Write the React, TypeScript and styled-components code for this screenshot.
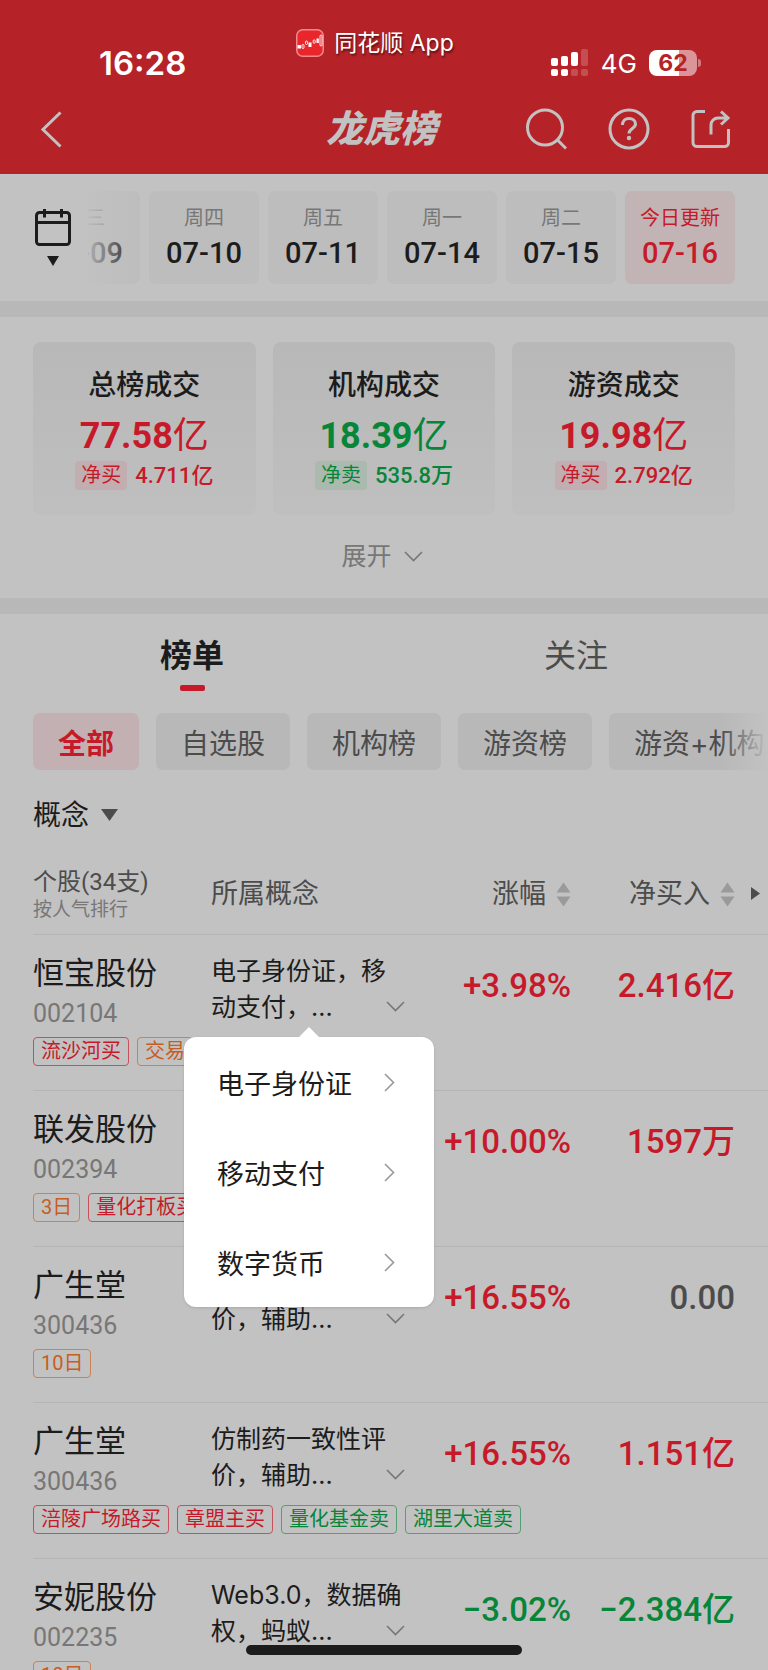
import React from "react";
import styled, { createGlobalStyle } from "styled-components";

type Tone = "red" | "green" | "orange" | "gray";

const tones: Record<Tone, string> = {
  red: "#c61a2a",
  green: "#078538",
  orange: "#c65e22",
  gray: "#4c4c4c",
};
const tagBorders: Record<Tone, string> = {
  red: "#c6515b",
  green: "#53a170",
  orange: "#c8835a",
  gray: "#999999",
};
const tints: Record<Tone, string> = {
  red: "#c2aeb0",
  green: "#abbaaf",
  orange: "#c2b4aa",
  gray: "#bababa",
};

const sans = `Inter, "Noto Sans CJK SC", sans-serif`;
const numeric = `Roboto, "Noto Sans CJK SC", sans-serif`;

const GlobalStyle = createGlobalStyle`
  * { box-sizing: border-box; }
  body { margin: 0; background: #c2c2c2; }
  button { border: 0; padding: 0; margin: 0; background: none; color: inherit; font: inherit; cursor: pointer; }
  svg { display: block; flex: none; }
`;

const Screen = styled.div`
  position: relative;
  display: flex;
  flex-direction: column;
  height: 100vh;
  overflow: hidden;
  background: #c2c2c2;
  color: #1c1c1c;
  font-family: ${sans};
`;

const Header = styled.header`
  position: relative;
  flex: none;
  background: #b52329;
`;

const StatusBar = styled.div`
  display: flex;
  justify-content: space-between;
  align-items: flex-end;
  height: 84px;
  padding: 0 67px 0 99px;
  color: #fff;
`;

const Clock = styled.time`
  font-size: 33px;
  line-height: 42px;
  font-weight: 600;
`;

const SourceApp = styled.div`
  position: absolute;
  top: 28px;
  left: 0;
  right: 0;
  display: flex;
  justify-content: center;
  align-items: center;
  gap: 10px;
  padding-right: 18px;
  color: #fff;
  font-size: 23px;
  line-height: 30px;
  text-shadow: 1px 2px 2px rgba(0, 0, 0, 0.5);
`;

const StatusIcons = styled.div`
  display: flex;
  align-items: center;
  gap: 12px;
  height: 42px;
  font-size: 26px;
`;

const Battery = styled.div`
  display: flex;
  align-items: center;
  gap: 1px;
`;

const BatteryBody = styled.div`
  width: 48px;
  height: 26px;
  border-radius: 8px;
  background: linear-gradient(90deg, #fff 62%, #db9497 62%);
  color: #b52329;
  font-size: 23px;
  font-weight: 700;
  line-height: 26px;
  text-align: center;
`;

const BatteryTip = styled.div`
  width: 3px;
  height: 8px;
  border-radius: 0 3px 3px 0;
  background: #d27b7f;
`;

const NavBar = styled.nav`
  display: grid;
  grid-template-columns: 1fr auto 1fr;
  align-items: center;
  height: 90px;
  padding: 0 37px 0 40px;
  color: #c2c2c2;
`;

const Title = styled.h1`
  margin: 0;
  padding-right: 8px;
  font-size: 37px;
  line-height: 48px;
  font-weight: 900;
  font-style: italic;
`;

const NavActions = styled.div`
  display: flex;
  justify-content: flex-end;
  align-items: center;
  gap: 41px;
`;

const DateBar = styled.section`
  display: flex;
  flex: none;
  padding: 17px 33px 17px 34px;
`;

const CalendarButton = styled.button`
  display: flex;
  flex: none;
  flex-direction: column;
  align-items: center;
  gap: 9px;
  width: 38px;
  padding-top: 17px;
`;

const DateStrip = styled.div`
  position: relative;
  display: flex;
  justify-content: flex-end;
  flex: 1;
  gap: 9px;
  margin-left: 16px;
  overflow: hidden;

  &::before {
    content: "";
    position: absolute;
    inset: 0 auto 0 0;
    width: 52px;
    background: linear-gradient(90deg, rgba(194, 194, 194, 0.9), rgba(194, 194, 194, 0));
  }
`;

const DateTile = styled.button<{ $active?: boolean }>`
  display: flex;
  flex: none;
  flex-direction: column;
  align-items: center;
  width: 110px;
  height: 93px;
  padding-top: 13px;
  border-radius: 7px;
  background: ${(p) => (p.$active ? "#c2b3b4" : "#bdbdbd")};
  color: ${(p) => (p.$active ? tones.red : "#1c1c1c")};
`;

const Weekday = styled.span<{ $active?: boolean }>`
  color: ${(p) => (p.$active ? tones.red : "#777777")};
  font-size: 20px;
  line-height: 28px;
`;

const DateText = styled.span`
  font-family: ${numeric};
  font-size: 29px;
  font-weight: 500;
  line-height: 42px;
`;

const Band = styled.div`
  flex: none;
  height: 16px;
  background: #b8b8b8;
`;

const Summary = styled.section`
  flex: none;
  padding: 25px 33px 23px;
`;

const SummaryCards = styled.div`
  display: grid;
  grid-template-columns: repeat(3, 1fr);
  gap: 17px;
`;

const SummaryCard = styled.article`
  display: flex;
  flex-direction: column;
  align-items: center;
  padding: 23px 0 25px;
  border-radius: 8px;
  background: linear-gradient(#b8b8b8, #bfbfbf);
`;

const CardTitle = styled.h2`
  margin: 0;
  font-size: 28px;
  line-height: 40px;
  font-weight: 500;
`;

const CardValue = styled.div<{ $tone: Tone }>`
  margin-top: 6px;
  color: ${(p) => tones[p.$tone]};
  font-family: ${numeric};
  font-size: 36px;
  font-weight: 700;
  line-height: 50px;
`;

const Unit = styled.span`
  font-weight: 400;
`;

const CardNet = styled.div<{ $tone: Tone }>`
  display: flex;
  align-items: center;
  gap: 8px;
  color: ${(p) => tones[p.$tone]};
  font-family: ${numeric};
  font-size: 22px;
  font-weight: 500;
  line-height: 29px;
`;

const NetLabel = styled.span<{ $tone: Tone }>`
  padding: 0 6px;
  border-radius: 4px;
  background: ${(p) => tints[p.$tone]};
  font-size: 20px;
  font-weight: 400;
`;

const ExpandButton = styled.button`
  display: flex;
  align-items: center;
  gap: 12px;
  margin: 22px auto 0;
  padding-right: 4px;
  color: #777777;
  font-size: 25px;
  line-height: 38px;
`;

const Tabs = styled.div`
  display: grid;
  grid-template-columns: 1fr 1fr;
  flex: none;
  padding-top: 20px;
`;

const Tab = styled.button<{ $active?: boolean }>`
  display: flex;
  flex-direction: column;
  align-items: center;
  gap: 7px;
  color: ${(p) => (p.$active ? "#1c1c1c" : "#4c4c4c")};
  font-size: 32px;
  font-weight: ${(p) => (p.$active ? 700 : 400)};
  line-height: 44px;

  &::after {
    content: "";
    width: 25px;
    height: 6px;
    border-radius: 2px;
    background: ${(p) => (p.$active ? "#c61a2a" : "transparent")};
  }
`;

const Filters = styled.div`
  position: relative;
  display: flex;
  flex: none;
  gap: 17px;
  margin-top: 22px;
  padding-left: 33px;
  overflow: hidden;

  &::after {
    content: "";
    position: absolute;
    inset: 0 0 0 auto;
    width: 48px;
    background: linear-gradient(90deg, rgba(194, 194, 194, 0), #c2c2c2);
  }
`;

const Chip = styled.button<{ $active?: boolean }>`
  flex: none;
  height: 57px;
  padding: 0 25px;
  border-radius: 7px;
  background: ${(p) => (p.$active ? "#c2b0b2" : "#b8b8b8")};
  color: ${(p) => (p.$active ? "#c61a2a" : "#4c4c4c")};
  font-size: 28px;
  font-weight: ${(p) => (p.$active ? 700 : 400)};
  white-space: nowrap;
`;

const ConceptFilter = styled.button`
  display: flex;
  flex: none;
  align-self: flex-start;
  align-items: center;
  gap: 12px;
  margin: 25px 0 31px 33px;
  font-size: 28px;
  line-height: 40px;
`;

const Listing = styled.main`
  flex: 1;
  min-height: 0;
  margin-left: 33px;
`;

const StockTable = styled.table`
  width: 100%;
  table-layout: fixed;
  border-collapse: separate;
  border-spacing: 0;
`;

const HeadCell = styled.th<{ $width?: number; $align?: string }>`
  position: relative;
  width: ${(p) => (p.$width ? `${p.$width}px` : "auto")};
  padding: 0 0 12px;
  border-bottom: 1px solid #b5b5b5;
  color: #4c4c4c;
  font-size: 27px;
  font-weight: 400;
  line-height: 36px;
  text-align: ${(p) => p.$align || "left"};
  white-space: nowrap;

  &:last-child {
    padding-right: 33px;
  }
`;

const HeadMain = styled.div`
  font-family: ${numeric};
  font-size: 24px;
  line-height: 32px;
`;

const HeadSub = styled.div`
  color: #777777;
  font-size: 19px;
  line-height: 24px;
`;

const SortButton = styled.button`
  display: inline-flex;
  align-items: center;
  gap: 10px;
  vertical-align: top;
`;

const MoreMark = styled.svg`
  position: absolute;
  top: 21px;
  right: 8px;
`;

const NameCell = styled.td`
  height: 102px;
  padding: 18px 0 0;
  vertical-align: top;
`;

const StockName = styled.div`
  font-size: 31px;
  line-height: 40px;
`;

const StockCode = styled.div`
  margin-top: 7px;
  color: #777777;
  font-family: ${numeric};
  font-size: 25px;
  line-height: 28px;
`;

const ConceptCell = styled.td`
  position: relative;
  padding: 18px 0 0;
  vertical-align: top;
`;

const ConceptButton = styled.button`
  display: flex;
  justify-content: space-between;
  align-items: flex-end;
  width: 100%;
  color: #1c1c1c;
  font-size: 25px;
  line-height: 36px;
  text-align: left;
  white-space: nowrap;

  svg {
    margin: 0 0 13px -20px;
  }
`;

const FigureCell = styled.td<{ $tone: Tone }>`
  padding: 31px 0 0;
  color: ${(p) => tones[p.$tone]};
  font-family: ${numeric};
  font-size: 33px;
  font-weight: 500;
  line-height: 40px;
  text-align: right;
  vertical-align: top;
  white-space: nowrap;

  &:last-child {
    padding-right: 33px;
  }
`;

const TagCell = styled.td`
  height: 54px;
  padding: 0;
  border-bottom: 1px solid #b5b5b5;
  vertical-align: top;
`;

const TagList = styled.div`
  display: flex;
  gap: 8px;
`;

const Tag = styled.span<{ $tone: Tone }>`
  height: 29px;
  padding: 0 7px;
  border: 1px solid ${(p) => tagBorders[p.$tone]};
  border-radius: 4px;
  color: ${(p) => tones[p.$tone]};
  font-family: ${numeric};
  font-size: 20px;
  line-height: 27px;
  white-space: nowrap;
`;

const Popover = styled.div`
  position: absolute;
  z-index: 2;
  top: 102px;
  left: -27px;
  width: 250px;
  border-radius: 12px;
  background: #fff;
  box-shadow: 0 1px 3px rgba(0, 0, 0, 0.12);

  &::before {
    content: "";
    position: absolute;
    top: -10px;
    left: 115px;
    border: 10px solid transparent;
    border-top: 0;
    border-bottom-color: #fff;
  }
`;

const PopoverItem = styled.button`
  display: flex;
  justify-content: space-between;
  align-items: center;
  width: 100%;
  height: 90px;
  padding: 0 39px 0 33px;
  color: #1c1c1c;
  font-size: 27px;
`;

const HomeIndicator = styled.div`
  position: absolute;
  z-index: 3;
  bottom: 15px;
  left: 32%;
  width: 36%;
  height: 10px;
  border-radius: 5px;
  background: #1c1c1c;
`;

const Chevron = ({ color = "#777777" }: { color?: string }) => (
  <svg width="19" height="11" viewBox="0 0 19 11" fill="none" stroke={color} strokeWidth="1.6">
    <path d="M1 1l8.500 8.500L18 1" />
  </svg>
);

const ChevronRight = () => (
  <svg width="11" height="19" viewBox="0 0 11 19" fill="none" stroke="#999999" strokeWidth="1.600">
    <path d="M1 1l8.500 8.500L1 18" />
  </svg>
);

const Sorter = () => (
  <svg width="15" height="25" viewBox="0 0 15 25" fill="#9a9a9a">
    <path d="M7.500 0.500L14.500 10.500H0.500zM7.500 24.500L0.500 14.500H14.500z" />
  </svg>
);

const AppLogo = () => (
  <svg width="28" height="28" viewBox="0 0 28 28">
    <rect x="0.750" y="0.750" width="26.500" height="26.500" rx="6" fill="#e8262c" stroke="#f08a8d" strokeWidth="1.500" />
    <g fill="#fff">
      <rect x="1.500" y="16" width="3.500" height="3.500" />
      <rect x="12.500" y="13.500" width="3" height="4.500" />
      <rect x="20.500" y="9.500" width="2.300" height="4.500" />
    </g>
    <g fill="none" stroke="#fff" strokeWidth="0.900">
      <rect x="6" y="15.500" width="2" height="4" rx="1" />
      <rect x="9.500" y="12" width="2" height="3.500" rx="1" />
      <rect x="17.200" y="10.800" width="2" height="3.500" rx="1" />
      <rect x="24" y="6" width="2" height="11" rx="1" />
    </g>
  </svg>
);

const Signal = () => (
  <svg width="38" height="28" viewBox="0 0 38 28" fill="#fff">
    <rect x="0" y="9" width="7" height="8" rx="2" />
    <rect x="10" y="7" width="7" height="10" rx="2" />
    <rect x="20" y="3" width="7" height="14" rx="2" />
    <rect x="30" y="0" width="7" height="17" rx="2" opacity="0.200" />
    <rect x="0" y="20" width="7" height="7" rx="2" />
    <rect x="10" y="20" width="7" height="7" rx="2" />
    <rect x="20" y="20" width="7" height="7" rx="2" opacity="0.200" />
    <rect x="30" y="20" width="7" height="7" rx="2" opacity="0.200" />
  </svg>
);

const dates = [
  { day: "周三", date: "07-09" },
  { day: "周四", date: "07-10" },
  { day: "周五", date: "07-11" },
  { day: "周一", date: "07-14" },
  { day: "周二", date: "07-15" },
  { day: "今日更新", date: "07-16", active: true },
];

const cards: { title: string; value: string; label: string; net: string; tone: Tone }[] = [
  { title: "总榜成交", value: "77.58", label: "净买", net: "4.711亿", tone: "red" },
  { title: "机构成交", value: "18.39", label: "净卖", net: "535.8万", tone: "green" },
  { title: "游资成交", value: "19.98", label: "净买", net: "2.792亿", tone: "red" },
];

const filters = ["全部", "自选股", "机构榜", "游资榜", "游资+机构"];

const popoverItems = ["电子身份证", "移动支付", "数字货币"];

interface Stock {
  name: string;
  code: string;
  concept?: [string, string];
  change: string;
  changeTone: Tone;
  net: string;
  netTone: Tone;
  tags: [string, Tone][];
}

const stocks: Stock[] = [
  { name: "恒宝股份", code: "002104", concept: ["电子身份证，移", "动支付，..."], change: "+3.98%", changeTone: "red", net: "2.416亿", netTone: "red", tags: [["流沙河买", "red"], ["交易", "orange"]] },
  { name: "联发股份", code: "002394", change: "+10.00%", changeTone: "red", net: "1597万", netTone: "red", tags: [["3日", "orange"], ["量化打板买", "red"]] },
  { name: "广生堂", code: "300436", concept: ["仿制药一致性评", "价，辅助..."], change: "+16.55%", changeTone: "red", net: "0.00", netTone: "gray", tags: [["10日", "orange"]] },
  { name: "广生堂", code: "300436", concept: ["仿制药一致性评", "价，辅助..."], change: "+16.55%", changeTone: "red", net: "1.151亿", netTone: "red", tags: [["涪陵广场路买", "red"], ["章盟主买", "red"], ["量化基金卖", "green"], ["湖里大道卖", "green"]] },
  { name: "安妮股份", code: "002235", concept: ["Web3.0，数据确", "权，蚂蚁..."], change: "−3.02%", changeTone: "green", net: "−2.384亿", netTone: "green", tags: [["10日", "orange"]] },
];

export default function App() {
  return (
    <Screen>
      <GlobalStyle />
      <Header>
        <StatusBar>
          <Clock>16:28</Clock>
          <StatusIcons>
            <Signal />
            <span>4G</span>
            <Battery>
              <BatteryBody>62</BatteryBody>
              <BatteryTip />
            </Battery>
          </StatusIcons>
        </StatusBar>
        <SourceApp>
          <AppLogo />
          <span>同花顺 App</span>
        </SourceApp>
        <NavBar>
          <button aria-label="返回">
            <svg width="22" height="37" viewBox="0 0 22 37" fill="none" stroke="currentColor" strokeWidth="3">
              <path d="M20.500 1.500L3 18.500L20.500 35.500" />
            </svg>
          </button>
          <Title>龙虎榜</Title>
          <NavActions>
            <button aria-label="搜索">
              <svg width="42" height="42" viewBox="0 0 42 42" fill="none" stroke="currentColor" strokeWidth="3">
                <circle cx="20" cy="19.500" r="17.500" />
                <path d="M32 31.500L41 40.500" />
              </svg>
            </button>
            <button aria-label="帮助">
              <svg width="42" height="42" viewBox="0 0 42 42" fill="none" stroke="currentColor" strokeWidth="3">
                <circle cx="21" cy="21" r="19" />
                <path d="M14.500 17C14.500 12.500 17.500 10.500 21 10.500s6.500 2 6.500 5.500c0 4.500-6.500 4.500-6.500 9.500" />
                <circle cx="21" cy="30" r="2.200" fill="currentColor" stroke="none" />
              </svg>
            </button>
            <button aria-label="分享">
              <svg width="40" height="40" viewBox="0 0 40 40" fill="none" stroke="currentColor" strokeWidth="3">
                <path d="M14 2.500H6a4 4 0 0 0-4 4V33.500a4 4 0 0 0 4 4H33.500a4 4 0 0 0 4-4V20M20 25.500V16a7 7 0 0 1 7-7H36M30 2.500L37 9L30 15.500" />
              </svg>
            </button>
          </NavActions>
        </NavBar>
      </Header>

      <DateBar>
        <CalendarButton aria-label="选择日期">
          <svg width="38" height="39" viewBox="0 0 38 39" fill="none" stroke="#1c1c1c" strokeWidth="3">
            <rect x="2.500" y="4.500" width="33" height="32" rx="3" />
            <path d="M2.500 14.500H35.500M10.500 1V9.500M27.500 1V9.500" />
          </svg>
          <svg width="12" height="10" viewBox="0 0 12 10" fill="#1c1c1c">
            <path d="M0 0H12L6 10z" />
          </svg>
        </CalendarButton>
        <DateStrip>
          {dates.map((d) => (
            <DateTile key={d.date} $active={d.active}>
              <Weekday $active={d.active}>{d.day}</Weekday>
              <DateText>{d.date}</DateText>
            </DateTile>
          ))}
        </DateStrip>
      </DateBar>
      <Band />

      <Summary>
        <SummaryCards>
          {cards.map((c) => (
            <SummaryCard key={c.title}>
              <CardTitle>{c.title}</CardTitle>
              <CardValue $tone={c.tone}>
                {c.value}
                <Unit>亿</Unit>
              </CardValue>
              <CardNet $tone={c.tone}>
                <NetLabel $tone={c.tone}>{c.label}</NetLabel>
                {c.net}
              </CardNet>
            </SummaryCard>
          ))}
        </SummaryCards>
        <ExpandButton>
          展开
          <Chevron />
        </ExpandButton>
      </Summary>
      <Band />

      <Tabs>
        <Tab $active>榜单</Tab>
        <Tab>关注</Tab>
      </Tabs>

      <Filters>
        {filters.map((f, i) => (
          <Chip key={f} $active={i === 0}>
            {f}
          </Chip>
        ))}
      </Filters>

      <ConceptFilter>
        概念
        <svg width="17" height="12" viewBox="0 0 17 12" fill="#4c4c4c">
          <path d="M0 0H17L8.500 12z" />
        </svg>
      </ConceptFilter>

      <Listing>
        <StockTable>
          <thead>
            <tr>
              <HeadCell $width={178}>
                <HeadMain>个股(34支)</HeadMain>
                <HeadSub>按人气排行</HeadSub>
              </HeadCell>
              <HeadCell $width={194}>所属概念</HeadCell>
              <HeadCell $width={166} $align="right">
                <SortButton>
                  涨幅
                  <Sorter />
                </SortButton>
              </HeadCell>
              <HeadCell $align="right">
                <SortButton>
                  净买入
                  <Sorter />
                </SortButton>
                <MoreMark width="9" height="13" viewBox="0 0 9 13" fill="#4c4c4c">
                  <path d="M0 0L9 6.500L0 13z" />
                </MoreMark>
              </HeadCell>
            </tr>
          </thead>
          {stocks.map((s, i) => (
            <tbody key={i}>
              <tr>
                <NameCell>
                  <StockName>{s.name}</StockName>
                  <StockCode>{s.code}</StockCode>
                </NameCell>
                <ConceptCell>
                  {s.concept && (
                    <ConceptButton aria-expanded={i === 0}>
                      <span>
                        {s.concept[0]}
                        <br />
                        {s.concept[1]}
                      </span>
                      <Chevron />
                    </ConceptButton>
                  )}
                  {i === 0 && (
                    <Popover>
                      {popoverItems.map((item) => (
                        <PopoverItem key={item}>
                          {item}
                          <ChevronRight />
                        </PopoverItem>
                      ))}
                    </Popover>
                  )}
                </ConceptCell>
                <FigureCell $tone={s.changeTone}>{s.change}</FigureCell>
                <FigureCell $tone={s.netTone}>{s.net}</FigureCell>
              </tr>
              <tr>
                <TagCell colSpan={4}>
                  <TagList>
                    {s.tags.map(([label, tone]) => (
                      <Tag key={label} $tone={tone}>
                        {label}
                      </Tag>
                    ))}
                  </TagList>
                </TagCell>
              </tr>
            </tbody>
          ))}
        </StockTable>
      </Listing>
      <HomeIndicator />
    </Screen>
  );
}
